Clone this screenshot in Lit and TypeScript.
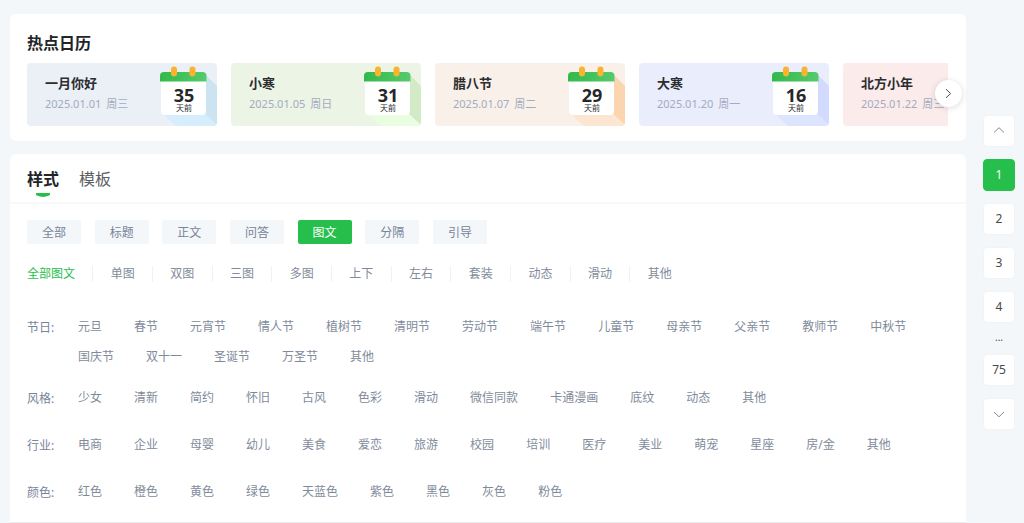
import { LitElement, html, css } from "lit";
import { customElement, property, state } from "lit/decorators.js";

const FONT = css`"Noto Sans", "Noto Sans CJK SC", sans-serif`;

interface Festival {
  name: string;
  date: string;
  week: string;
  days: number;
  theme: string;
}

const FESTIVALS: Festival[] = [
  { name: "一月你好", date: "2025.01.01", week: "周三", days: 35, theme: "sky" },
  { name: "小寒", date: "2025.01.05", week: "周日", days: 31, theme: "leaf" },
  { name: "腊八节", date: "2025.01.07", week: "周二", days: 29, theme: "peach" },
  { name: "大寒", date: "2025.01.20", week: "周一", days: 16, theme: "iris" },
  { name: "北方小年", date: "2025.01.22", week: "周三", days: 0, theme: "rose" },
];

const KINDS = ["全部", "标题", "正文", "问答", "图文", "分隔", "引导"];

const SUBKINDS = ["全部图文", "单图", "双图", "三图", "多图", "上下", "左右", "套装", "动态", "滑动", "其他"];

const FILTERS: { label: string; items: string[] }[] = [
  {
    label: "节日:",
    items: ["元旦", "春节", "元宵节", "情人节", "植树节", "清明节", "劳动节", "端午节", "儿童节", "母亲节", "父亲节", "教师节", "中秋节", "国庆节", "双十一", "圣诞节", "万圣节", "其他"],
  },
  {
    label: "风格:",
    items: ["少女", "清新", "简约", "怀旧", "古风", "色彩", "滑动", "微信同款", "卡通漫画", "底纹", "动态", "其他"],
  },
  {
    label: "行业:",
    items: ["电商", "企业", "母婴", "幼儿", "美食", "爱恋", "旅游", "校园", "培训", "医疗", "美业", "萌宠", "星座", "房/金", "其他"],
  },
  {
    label: "颜色:",
    items: ["红色", "橙色", "黄色", "绿色", "天蓝色", "紫色", "黑色", "灰色", "粉色"],
  },
];

@customElement("festival-card")
export class FestivalCard extends LitElement {
  @property({ attribute: false }) festival!: Festival;

  static styles = css`
    :host {
      display: block;
      flex: 0 0 190px;
      font-family: ${FONT};
    }
    .card {
      display: flex;
      justify-content: space-between;
      height: 63px;
      border-radius: 4px;
      overflow: hidden;
      color: inherit;
      text-decoration: none;
    }
    .sky { background: #eaf0f5; --side: #cce4f1; --base: #d5edfd; }
    .leaf { background: #ebf4e5; --side: #d3eac6; --base: #e9fde0; }
    .peach { background: #f9f0ea; --side: #fad5b0; --base: #fce6d2; }
    .iris { background: #eaedfc; --side: #d2dbfe; --base: #dde4fd; }
    .rose { background: #fcebeb; --side: #f9d0d0; --base: #fde0e0; }
    .info {
      padding: 10px 0 0 18px;
      white-space: nowrap;
    }
    .name {
      margin: 0;
      font-size: 13px;
      line-height: 20px;
      font-weight: 700;
      color: #2b2d30;
    }
    .when {
      display: flex;
      gap: 5px;
      margin: 2px 0 0;
      font-size: 11px;
      line-height: 18px;
      color: #a2acc0;
    }
    .calendar {
      display: grid;
      flex: 0 0 58px;
    }
    .art, .count { grid-area: 1 / 1; }
    .art { display: block; }
    .side { fill: var(--side); }
    .base { fill: var(--base); }
    .count {
      display: flex;
      flex-direction: column;
      align-items: center;
      padding: 23px 8px 0 0;
      color: #25272b;
    }
    .days {
      font-size: 18px;
      line-height: 18px;
      font-weight: 700;
    }
    .unit {
      font-size: 8px;
      line-height: 8px;
    }
  `;

  render() {
    const f = this.festival;
    return html`
      <a class="card ${f.theme}" href="#">
        <div class="info">
          <h3 class="name">${f.name}</h3>
          <p class="when"><span>${f.date}</span><span>${f.week}</span></p>
        </div>
        ${f.days ? this.renderCalendar(f.days) : null}
      </a>
    `;
  }

  private renderCalendar(days: number) {
    return html`
      <div class="calendar">
        <svg class="art" width="58" height="63" viewBox="0 0 58 63" aria-hidden="true">
          <defs>
            <linearGradient id="band" x1="0" x2="1">
              <stop offset="0" stop-color="#31b94b" />
              <stop offset="1" stop-color="#55ca6c" />
            </linearGradient>
          </defs>
          <path class="side" d="M46 11 58 23V62L46 51z" />
          <path class="base" d="M4 51H46L58 62V63H20Q17 63 15 61z" />
          <path fill="#fff" d="M2 16H47V48Q47 52 43 52H6Q2 52 2 48z" />
          <path fill="url(#band)" d="M1 18.500V13Q1 9 5 9H43.500Q47.500 9 47.500 13V18.500z" />
          <rect x="12" y="3.500" width="6" height="10" rx="3" fill="#fbb32f" />
          <rect x="30.500" y="3.500" width="6" height="10" rx="3" fill="#fbb32f" />
        </svg>
        <div class="count">
          <span class="days">${days}</span>
          <span class="unit">天前</span>
        </div>
      </div>
    `;
  }
}

@customElement("page-rail")
export class PageRail extends LitElement {
  @state() private page = 1;

  static styles = css`
    :host { display: block; }
    .rail {
      display: flex;
      flex-direction: column;
      align-items: center;
      gap: 12px;
      padding: 115px 0 0;
      font-family: ${FONT};
    }
    .step {
      display: flex;
      align-items: center;
      justify-content: center;
      box-sizing: border-box;
      width: 32px;
      height: 32px;
      padding: 0;
      border: 1px solid #f1f4f6;
      border-radius: 4px;
      background: #fff;
      font: inherit;
      font-size: 12px;
      line-height: 16px;
      color: #45494e;
      cursor: pointer;
    }
    .current {
      border-color: #27bf4c;
      background: #27bf4c;
      color: #fff;
    }
    .more {
      height: 7px;
      font-size: 10px;
      line-height: 4px;
      color: #45494e;
    }
    .arrow {
      fill: none;
      stroke: #85898d;
    }
  `;

  private pageButton(n: number) {
    return html`<button class="step ${n === this.page ? "current" : ""}" @click=${() => (this.page = n)}>${n}</button>`;
  }

  render() {
    return html`
      <nav class="rail" aria-label="分页">
        <button class="step" aria-label="上一页" @click=${() => (this.page = Math.max(1, this.page - 1))}>
          <svg class="arrow" width="12" height="8" viewBox="0 0 12 8"><path d="M1 5.500 6 .7 11 5.500" /></svg>
        </button>
        ${[1, 2, 3, 4].map((n) => this.pageButton(n))}
        <span class="more">...</span>
        ${this.pageButton(75)}
        <button class="step" aria-label="下一页" @click=${() => (this.page = Math.min(75, this.page + 1))}>
          <svg class="arrow" width="12" height="8" viewBox="0 0 12 8"><path d="M1 2 6 6.800 11 2" /></svg>
        </button>
      </nav>
    `;
  }
}

@customElement("app-root")
export class AppRoot extends LitElement {
  @state() private tab = "样式";
  @state() private kind = "图文";
  @state() private subkind = "全部图文";

  static styles = css`
    :host {
      display: block;
      min-height: 100vh;
      background: #f3f7f9;
      font-family: ${FONT};
      color: #2b2d30;
    }
    .page {
      display: grid;
      grid-template-columns: minmax(0, 1fr) 32px;
      column-gap: 17px;
      padding: 0 9px 0 10px;
    }
    .content { padding-top: 14px; }
    .panel {
      background: #fff;
      border-radius: 6px 6px 0 0;
    }
    .hot {
      padding: 17px 18px 15px 17px;
      margin-bottom: 13px;
      border-radius: 6px;
    }
    .heading {
      margin: 0 0 8px;
      font-size: 16px;
      line-height: 24px;
      font-weight: 700;
      color: #222427;
    }
    .strip { position: relative; }
    .cards {
      display: flex;
      gap: 14px;
      overflow: hidden;
    }
    .next {
      position: absolute;
      top: 17px;
      right: -14px;
      display: flex;
      align-items: center;
      justify-content: center;
      width: 27px;
      height: 27px;
      padding: 0;
      border: 0;
      border-radius: 50%;
      background: #fff;
      box-shadow: 0 1px 6px rgba(0, 0, 0, 0.15);
      cursor: pointer;
    }
    .chevron {
      fill: none;
      stroke: #4a4d51;
    }
    .tabs {
      display: flex;
      gap: 20px;
      box-sizing: border-box;
      height: 50px;
      padding: 13px 17px 0;
      border-bottom: 2px solid #f7f9fa;
    }
    .tab {
      display: flex;
      flex-direction: column;
      align-items: center;
      gap: 1px;
      padding: 0;
      border: 0;
      background: none;
      font: inherit;
      font-size: 16px;
      line-height: 25px;
      color: #5c6065;
      cursor: pointer;
    }
    .tab-on {
      font-weight: 700;
      color: #222427;
    }
    .mark {
      display: block;
      fill: #27bf4c;
    }
    .library {
      padding: 16px 17px 12px;
      border-bottom: 1px solid #e9ebed;
    }
    .kinds {
      display: flex;
      justify-content: space-between;
      max-width: 460px;
    }
    .kind {
      width: 54px;
      height: 24px;
      padding: 2px 0 0;
      border: 0;
      border-radius: 2px;
      background: #f3f7f9;
      font: inherit;
      font-size: 12px;
      line-height: 22px;
      color: #77849a;
      cursor: pointer;
    }
    .kind-on {
      background: #27bf4c;
      color: #fff;
    }
    .subkinds {
      display: flex;
      align-items: center;
      justify-content: space-between;
      max-width: 645px;
      margin-top: 18px;
    }
    .rule {
      width: 1px;
      height: 16px;
      background: #eff2f5;
    }
    .link {
      font-size: 12px;
      line-height: 24px;
      color: #7f8b9b;
      text-decoration: none;
      white-space: nowrap;
    }
    .link-on { color: #27bf4c; }
    .filters {
      display: flex;
      flex-direction: column;
      gap: 17px;
      margin-top: 29px;
    }
    .filter {
      display: grid;
      grid-template-columns: 36px minmax(0, 1fr);
      column-gap: 15px;
      align-items: start;
      min-height: 30px;
    }
    .label {
      padding-top: 1px;
      font-size: 12px;
      line-height: 24px;
      color: #77849a;
    }
    .options {
      display: flex;
      flex-wrap: wrap;
      gap: 6px 32px;
    }
  `;

  private renderTab(name: string) {
    const on = this.tab === name;
    return html`
      <button class="tab ${on ? "tab-on" : ""}" @click=${() => (this.tab = name)}>
        ${name}
        ${on
          ? html`<svg class="mark" width="14" height="4" viewBox="0 0 14 4"><path d="M0 0H14V1.200Q14 2.300 12.500 2.800Q7 5 1.500 2.800Q0 2.300 0 1.200z" /></svg>`
          : null}
      </button>
    `;
  }

  render() {
    return html`
      <div class="page">
        <main class="content">
          <section class="panel hot">
            <h2 class="heading">热点日历</h2>
            <div class="strip">
              <div class="cards">
                ${FESTIVALS.map((f) => html`<festival-card .festival=${f}></festival-card>`)}
              </div>
              <button class="next" aria-label="下一组">
                <svg class="chevron" width="7" height="11" viewBox="0 0 7 11"><path d="M1 1.200 5.600 5.500 1 9.800" /></svg>
              </button>
            </div>
          </section>

          <section class="panel">
            <div class="tabs">${["样式", "模板"].map((t) => this.renderTab(t))}</div>
            <div class="library">
              <div class="kinds">
                ${KINDS.map(
                  (k) => html`<button class="kind ${k === this.kind ? "kind-on" : ""}" @click=${() => (this.kind = k)}>${k}</button>`
                )}
              </div>
              <nav class="subkinds">
                ${SUBKINDS.map(
                  (s, i) => html`${i ? html`<span class="rule"></span>` : null}<a
                      class="link ${s === this.subkind ? "link-on" : ""}"
                      href="#"
                      @click=${() => (this.subkind = s)}
                      >${s}</a
                    >`
                )}
              </nav>
              <div class="filters">
                ${FILTERS.map(
                  (row) => html`
                    <div class="filter">
                      <span class="label">${row.label}</span>
                      <div class="options">${row.items.map((i) => html`<a class="link" href="#">${i}</a>`)}</div>
                    </div>
                  `
                )}
              </div>
            </div>
          </section>
        </main>
        <page-rail></page-rail>
      </div>
    `;
  }
}
